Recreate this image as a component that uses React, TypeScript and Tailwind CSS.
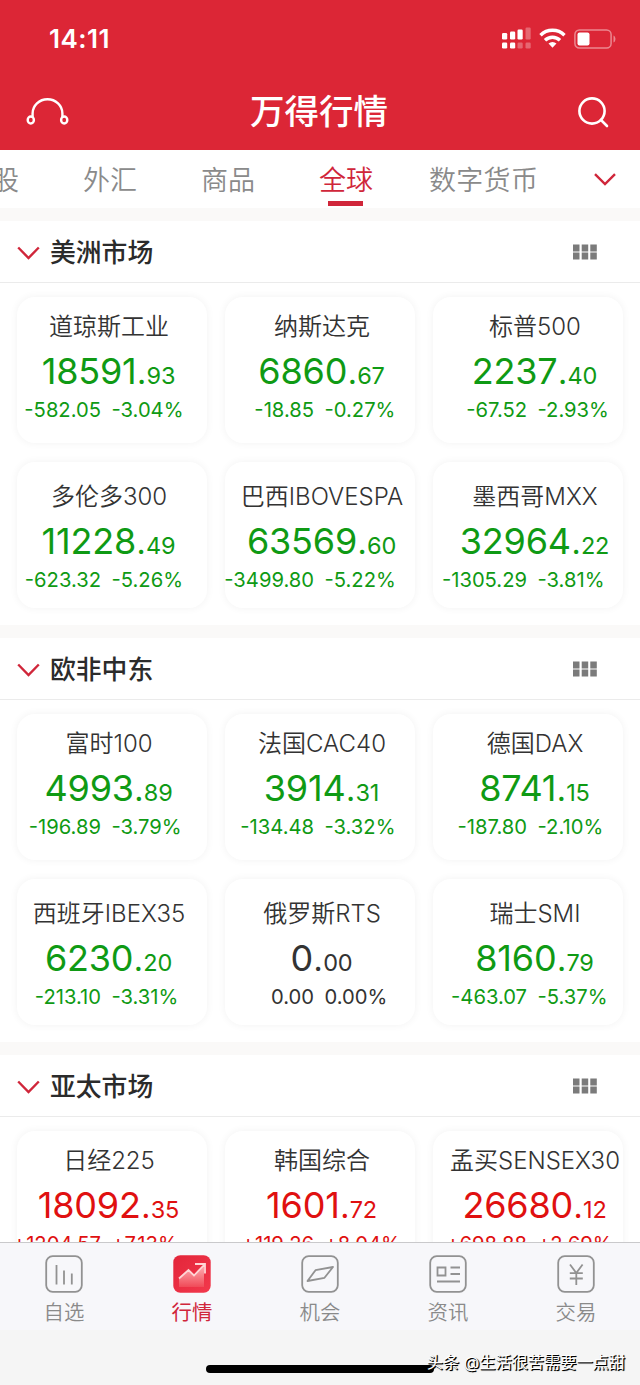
import clsx from "clsx";

type Quote = {
  name: string;
  int: string;
  dec: string;
  change: string;
  percent: string;
  trend: "up" | "down" | "flat";
};

type Market = {
  title: string;
  quotes: Quote[];
};

const markets: Market[] = [
  {
    title: "美洲市场",
    quotes: [
      { name: "道琼斯工业", int: "18591", dec: "93", change: "-582.05", percent: "-3.04%", trend: "down" },
      { name: "纳斯达克", int: "6860", dec: "67", change: "-18.85", percent: "-0.27%", trend: "down" },
      { name: "标普500", int: "2237", dec: "40", change: "-67.52", percent: "-2.93%", trend: "down" },
      { name: "多伦多300", int: "11228", dec: "49", change: "-623.32", percent: "-5.26%", trend: "down" },
      { name: "巴西IBOVESPA", int: "63569", dec: "60", change: "-3499.80", percent: "-5.22%", trend: "down" },
      { name: "墨西哥MXX", int: "32964", dec: "22", change: "-1305.29", percent: "-3.81%", trend: "down" },
    ],
  },
  {
    title: "欧非中东",
    quotes: [
      { name: "富时100", int: "4993", dec: "89", change: "-196.89", percent: "-3.79%", trend: "down" },
      { name: "法国CAC40", int: "3914", dec: "31", change: "-134.48", percent: "-3.32%", trend: "down" },
      { name: "德国DAX", int: "8741", dec: "15", change: "-187.80", percent: "-2.10%", trend: "down" },
      { name: "西班牙IBEX35", int: "6230", dec: "20", change: "-213.10", percent: "-3.31%", trend: "down" },
      { name: "俄罗斯RTS", int: "0", dec: "00", change: "0.00", percent: "0.00%", trend: "flat" },
      { name: "瑞士SMI", int: "8160", dec: "79", change: "-463.07", percent: "-5.37%", trend: "down" },
    ],
  },
  {
    title: "亚太市场",
    quotes: [
      { name: "日经225", int: "18092", dec: "35", change: "+1204.57", percent: "+7.13%", trend: "up" },
      { name: "韩国综合", int: "1601", dec: "72", change: "+119.26", percent: "+8.04%", trend: "up" },
      { name: "孟买SENSEX30", int: "26680", dec: "12", change: "+698.88", percent: "+2.69%", trend: "up" },
    ],
  },
];

const trendColor = {
  up: "text-[#e01010]",
  down: "text-[#0f9a14]",
  flat: "text-[#333333]",
};

const columnShift = ["-ml-[3px]", "ml-[2px]", "ml-[7px]"];

function StatusBar() {
  return (
    <div className="flex h-[76px] items-center pl-[49px] pr-[24px] text-white">
      <span className="pt-[2px] text-[26px] font-semibold leading-none tracking-[0.5px]">14:11</span>
      <svg className="ml-auto" width="30" height="22" viewBox="0 0 30 22" fill="currentColor">
        <rect x="1" y="6" width="5.2" height="6.5" rx="1.2" />
        <rect x="9" y="4.5" width="5.2" height="8" rx="1.2" />
        <rect x="16.5" y="2.5" width="5.2" height="10" rx="1.2" />
        <rect x="24.5" y="0.5" width="5.2" height="12" rx="1.2" opacity="0.3" />
        <rect x="1" y="15.5" width="5.2" height="6" rx="1.2" />
        <rect x="9" y="15.5" width="5.2" height="6" rx="1.2" />
        <rect x="16.5" y="15.5" width="5.2" height="6" rx="1.2" opacity="0.3" />
        <rect x="24.5" y="15.5" width="5.2" height="6" rx="1.2" opacity="0.3" />
      </svg>
      <svg className="ml-[8px]" width="27" height="20" viewBox="0 0 27 20" fill="none" stroke="currentColor" strokeWidth="3.4">
        <path d="M1.5 7.2a17 17 0 0 1 24 0" />
        <path d="M6 12.3a10.6 10.6 0 0 1 15 0" />
        <path d="M13.5 19.8l-4-4.2a5.8 5.8 0 0 1 8 0z" fill="currentColor" stroke="none" />
      </svg>
      <svg className="ml-[8px] mt-[1px]" width="42" height="20" viewBox="0 0 42 20">
        <rect x="0.9" y="0.9" width="36.2" height="18.2" rx="4.5" fill="none" stroke="white" strokeOpacity="0.45" strokeWidth="1.5" />
        <rect x="3.5" y="3.5" width="12" height="13" rx="2" fill="white" />
        <path d="M39.5 6.5c2.6 1 2.6 6 0 7z" fill="white" opacity="0.45" />
      </svg>
    </div>
  );
}

function TitleBar() {
  return (
    <div className="flex h-[74px] items-center justify-between pb-[2px] pl-[26px] pr-[31px] text-white">
      <svg width="43" height="28" viewBox="0 0 43 28" fill="none" stroke="currentColor" strokeWidth="2.4">
        <path d="M6.6 19.5V15.5a14.9 14.2 0 0 1 29.8 0V19.5" />
        <ellipse cx="4.8" cy="22" rx="3.1" ry="3.5" />
        <ellipse cx="38.2" cy="22" rx="3.1" ry="3.5" />
      </svg>
      <h1 className="mr-[8px] text-[34.5px] font-medium leading-none">万得行情</h1>
      <svg width="32" height="32" viewBox="0 0 32 32" fill="none" stroke="currentColor" strokeWidth="2.6" strokeLinecap="round">
        <circle cx="15" cy="15" r="12.6" />
        <path d="M24 24l6 6" />
      </svg>
    </div>
  );
}

function Tabs() {
  return (
    <nav className="flex h-[58px] items-center overflow-hidden whitespace-nowrap bg-white pt-[4px] text-[27px] font-[350] leading-[54px] text-[#8a8a8a]">
      <span className="-ml-[8px]">股</span>
      <span className="ml-[64px]">外汇</span>
      <span className="ml-[64px]">商品</span>
      <span className="relative ml-[64px] text-[#d0263a]">
        全球
        <i className="absolute bottom-[2px] left-[9px] h-[5px] w-[35px] bg-[#d0263a]" />
      </span>
      <span className="ml-[56px] tracking-[0.3px]">数字货币</span>
      <svg className="-mt-[4px] ml-[56px]" width="22" height="13" viewBox="0 0 22 13" fill="none" stroke="#d0263a" strokeWidth="2.4">
        <path d="M1 1.2l10 9.8L21 1.2" />
      </svg>
    </nav>
  );
}

function QuoteCard({ quote, index }: { quote: Quote; index: number }) {
  return (
    <div className="h-[146px] rounded-[18px] bg-white shadow-[0_0_9px_rgba(0,0,0,0.055)]">
      <div
        className={clsx(
          "flex w-[190px] flex-col items-center whitespace-nowrap",
          columnShift[index % 3],
          index < 3 ? "pt-[16px]" : "pt-[21px]"
        )}
      >
        <div className="text-[24px] font-[350] leading-[28px] text-[#333333]">{quote.name}</div>
        <div className={clsx("-ml-[1px] mt-[8px] text-[36px] font-[380] leading-[44px] tracking-[-0.2px]", trendColor[quote.trend])}>
          {quote.int}
          <span className="mx-[0.5px] text-[32px]">.</span>
          <span className="text-[23.5px]">{quote.dec}</span>
        </div>
        <div className={clsx("-mt-[2px] flex w-full gap-[10.5px] text-[20.2px] leading-[28px]", trendColor[quote.trend])}>
          <span className="flex w-[87px] shrink-0 justify-end">{quote.change}</span>
          <span>{quote.percent}</span>
        </div>
      </div>
    </div>
  );
}

function MarketSection({ market }: { market: Market }) {
  return (
    <section className="mt-[13px] shrink-0 bg-white">
      <header className="flex h-[62px] items-center border-b border-[#ebebeb] pl-[17px] pr-[43px]">
        <svg className="mt-[3px]" width="23" height="14" viewBox="0 0 23 14" fill="none" stroke="#d0263a" strokeWidth="2.4">
          <path d="M1.2 1.5L11.5 12 21.8 1.5" />
        </svg>
        <h2 className="ml-[10px] pt-[2px] text-[25.8px] font-medium leading-none text-[#2b2b2b]">{market.title}</h2>
        <svg className="ml-auto" width="24" height="16" viewBox="0 0 24 16" fill="#7b7b7b">
          <path d="M0 0.5h6.5v7H0zM8.7 0.5h6.5v7H8.7zM17.3 0.5h6.5v7h-6.5zM0 8.5h6.5v7H0zM8.7 8.5h6.5v7H8.7zM17.3 8.5h6.5v7h-6.5z" />
        </svg>
      </header>
      <div className="grid grid-cols-[190px_190px_190px] gap-x-[18px] gap-y-[19px] pb-[17px] pl-[17px] pt-[14px]">
        {market.quotes.map((quote, index) => (
          <QuoteCard key={quote.name} quote={quote} index={index} />
        ))}
      </div>
    </section>
  );
}

function NavFrame({ children }: { children: React.ReactNode }) {
  return (
    <svg width="38" height="38" viewBox="0 0 38 38" fill="none" stroke="#929292" strokeWidth="1.8">
      <rect x="1.2" y="1.2" width="35.6" height="35.6" rx="6.5" />
      {children}
    </svg>
  );
}

function BottomNav() {
  const items = [
    {
      label: "自选",
      icon: (
        <NavFrame>
          <path d="M11.5 10v19.5M19 15.5v14M26.8 18.5v11" />
        </NavFrame>
      ),
    },
    {
      label: "行情",
      active: true,
      icon: (
        <svg width="38" height="38" viewBox="0 0 38 38" fill="none">
          <defs>
            <linearGradient id="tile" x1="0" y1="0" x2="1" y2="1">
              <stop offset="0" stopColor="#e3263a" />
              <stop offset="1" stopColor="#f2384c" />
            </linearGradient>
            <linearGradient id="area" x1="0" y1="0" x2="0" y2="1">
              <stop offset="0" stopColor="#ffb3b6" />
              <stop offset="1" stopColor="#f04a58" />
            </linearGradient>
          </defs>
          <rect x="0.3" y="0.3" width="37.4" height="37.4" rx="7" fill="url(#tile)" />
          <path d="M6 24l10-9 5 5.5L31 10v22H6z" fill="url(#area)" />
          <path d="M6 23.5l9.5-8.5 5.5 5.5L31 10M22 9h10v9.5" stroke="#ffd6d6" strokeWidth="1.8" />
        </svg>
      ),
    },
    {
      label: "机会",
      icon: (
        <NavFrame>
          <path d="M6.5 26L14.5 15.2 32 12 23.5 22.8z" strokeLinejoin="round" />
        </NavFrame>
      ),
    },
    {
      label: "资讯",
      icon: (
        <NavFrame>
          <path d="M8.5 12.5h8v8h-8zM21.5 12.5h9.5M21.5 19h9.5M8 26.5h23" />
        </NavFrame>
      ),
    },
    {
      label: "交易",
      icon: (
        <NavFrame>
          <path d="M13 9.5l6.3 8.5 6.3-8.5M19.3 18v12M12.8 18.2h13M12.8 23.5h13" />
        </NavFrame>
      ),
    },
  ];

  return (
    <footer className="h-[143px] shrink-0 border-t border-[#c9c9cb] bg-[#f5f5f5]">
      <div className="grid h-[87px] grid-cols-5 bg-[#f7f7fa]">
        {items.map((item) => (
          <div key={item.label} className="flex flex-col items-center pt-[12px]">
            {item.icon}
            <span
              className={clsx(
                "mt-[8px] text-[20.4px] leading-[24px]",
                item.active ? "text-[#d0263a]" : "font-[350] text-[#8a8a8a]"
              )}
            >
              {item.label}
            </span>
          </div>
        ))}
      </div>
      <div className="relative h-[55px]">
        <div className="mx-auto h-[8px] w-[228px] translate-y-[35px] rounded-full bg-black" />
        <span className="absolute right-[15px] top-[20px] whitespace-nowrap text-[16.2px] leading-[24px] text-white [text-shadow:1px_1px_0_#000,1px_1px_1px_#000]">
          头条 @生活很苦需要一点甜
        </span>
      </div>
    </footer>
  );
}

export default function App() {
  return (
    <div className="flex h-[1385px] w-[640px] flex-col overflow-hidden bg-[#faf9f8] font-['Inter','Noto_Sans_CJK_SC',sans-serif]">
      <div className="h-[150px] shrink-0 bg-[#dc2636]">
        <StatusBar />
        <TitleBar />
      </div>
      <div className="shrink-0">
        <Tabs />
      </div>
      <main className="flex min-h-0 flex-1 flex-col overflow-hidden">
        {markets.map((market) => (
          <MarketSection key={market.title} market={market} />
        ))}
      </main>
      <BottomNav />
    </div>
  );
}
